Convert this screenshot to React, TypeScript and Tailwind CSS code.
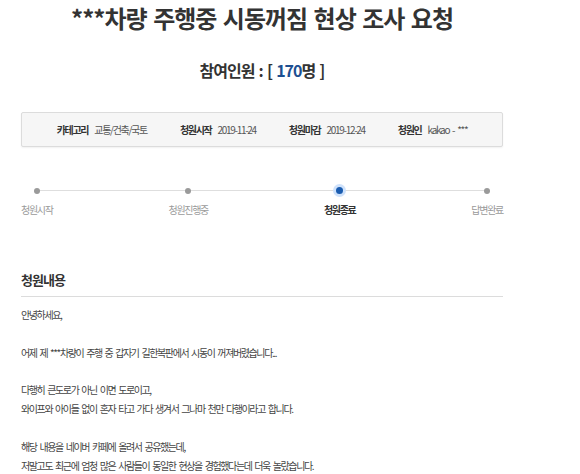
import * as React from 'react';

const steps = [
    { label: '청원시작', active: false },
    { label: '청원진행중', active: false },
    { label: '청원종료', active: true },
    { label: '답변완료', active: false },
];

const info = [
    { label: '카테고리', value: '교통/건축/국토' },
    { label: '청원시작', value: '2019-11-24' },
    { label: '청원마감', value: '2019-12-24' },
    { label: '청원인', value: 'kakao - ***' },
];

const paragraphs = [
    ['안녕하세요,'],
    ['어제 제 ***차량이 주행 중 갑자기 길한복판에서 시동이 꺼져버렸습니다...'],
    [
        '다행히 큰도로가 아닌 이면 도로이고,',
        '와이프와 아이들 없이 혼자 타고 가다 생겨서 그나마 천만 다행이라고 합니다.',
    ],
    [
        '해당 내용을 네이버 카페에 올려서 공유했는데,',
        '저말고도 최근에 엄청 많은 사람들이 동일한 현상을 경험했다는데 더욱 놀랐습니다.',
    ],
];

export default function App() {
    return (
        <div className="w-[580px] h-[474px] overflow-hidden bg-white font-['Noto_Sans_CJK_KR',sans-serif] text-[#333]">
            <div className="ml-[21px] w-[482px]">
                {/* Title */}
                <h1 className="text-center text-[24px] font-bold leading-[35px] tracking-[-1px] [word-spacing:2px] text-[#333]">
                    ***차량 주행중 시동꺼짐 현상 조사 요청
                </h1>

                {/* Participants */}
                <div className="mt-[23px] text-center text-[16px] font-bold leading-[24px] tracking-[-1px] [word-spacing:1.5px] text-[#333]">
                    참여인원 : [ <span className="text-[#1d4f91]">170</span>명 ]
                </div>

                {/* Info box */}
                <div className="mt-[30px] h-[35px] flex items-center justify-center gap-[33px] rounded-[2px] border border-[#dcdcdc] bg-[#f6f6f6] shadow-[0_1px_2px_rgba(0,0,0,0.06)] text-[10px] tracking-[-1.3px] [word-spacing:2px]">
                    {info.map((item) => (
                        <div key={item.label} className="flex items-center gap-[6px]">
                            <span className="font-bold text-[#333]">{item.label}</span>
                            <span className="text-[#555]">{item.value}</span>
                        </div>
                    ))}
                </div>

                {/* Progress steps */}
                <div className="relative mt-[40px] flex justify-between">
                    <div className="absolute left-[16px] right-[16px] top-[3px] h-[1px] bg-[#dedede]" />
                    {steps.map((step) => (
                        <div key={step.label} className="relative flex flex-col items-center">
                            {step.active ? (
                                <div className="w-[7px] h-[7px] rounded-full bg-[#1a5cb0] shadow-[0_0_0_3px_#cfe2fb]" />
                            ) : (
                                <div className="w-[6px] h-[6px] mt-[0.5px] rounded-full bg-[#9a9a9a]" />
                            )}
                            <span
                                className={
                                    step.active
                                        ? 'mt-[9px] text-[10px] leading-[14px] tracking-[-1.3px] font-bold text-[#333]'
                                        : 'mt-[9px] text-[10px] leading-[14px] tracking-[-1.3px] text-[#9a9a9a]'
                                }
                            >
                                {step.label}
                            </span>
                        </div>
                    ))}
                </div>

                {/* Content */}
                <h2 className="mt-[54px] pb-[7px] border-b border-[#dcdcdc] text-[13px] font-bold leading-[18px] tracking-[-1px] text-[#333]">
                    청원내용
                </h2>
                <div className="mt-[9px] text-[10px] leading-[18.7px] tracking-[-1.4px] [word-spacing:2px] text-[#444]">
                    {paragraphs.map((lines, i) => (
                        <p key={i} className="mb-[19px]">
                            {lines.map((line) => (
                                <span key={line} className="block">
                                    {line}
                                </span>
                            ))}
                        </p>
                    ))}
                </div>
            </div>
        </div>
    );
}
